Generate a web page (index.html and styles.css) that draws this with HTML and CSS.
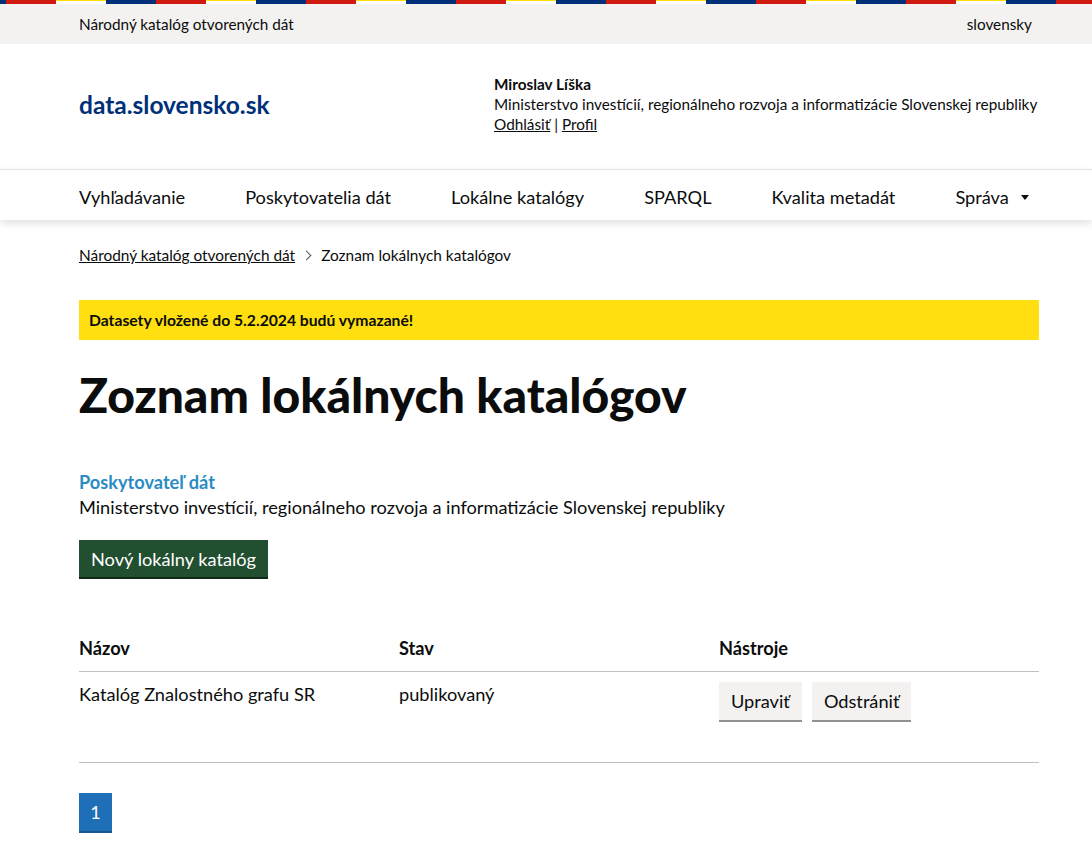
FILE: index.html
```html
<!DOCTYPE html>
<html lang="sk">
<head>
<meta charset="utf-8">
<title>Zoznam lokálnych katalógov</title>
<link rel="stylesheet" href="styles.css">
</head>
<body>
<div class="stripe"></div>
<div class="topbar">
  <div class="wrap topbar-inner">
    <span>Národný katalóg otvorených dát</span>
    <span class="lang">slovensky</span>
  </div>
</div>
<header class="header">
  <div class="wrap header-inner">
    <a class="logo" href="#">data.slovensko.sk</a>
    <div class="user">
      <div class="user-name">Miroslav Líška</div>
      <div>Ministerstvo investícií, regionálneho rozvoja a informatizácie Slovenskej republiky</div>
      <div><a href="#">Odhlásiť</a> | <a href="#">Profil</a></div>
    </div>
  </div>
</header>
<nav class="nav">
  <div class="wrap nav-inner">
    <a href="#">Vyhľadávanie</a>
    <a href="#">Poskytovatelia dát</a>
    <a href="#">Lokálne katalógy</a>
    <a href="#">SPARQL</a>
    <a href="#">Kvalita metadát</a>
    <a href="#" class="dropdown">Správa <span class="caret"></span></a>
  </div>
</nav>
<main class="wrap main">
  <div class="breadcrumb">
    <a href="#">Národný katalóg otvorených dát</a>
    <span class="chev"></span>
    <span>Zoznam lokálnych katalógov</span>
  </div>
  <div class="banner">Datasety vložené do 5.2.2024 budú vymazané!</div>
  <h1 class="title">Zoznam lokálnych katalógov</h1>
  <div class="provider-label">Poskytovateľ dát</div>
  <div class="provider">Ministerstvo investícií, regionálneho rozvoja a informatizácie Slovenskej republiky</div>
  <button class="btn-primary">Nový lokálny katalóg</button>
  <table class="table">
    <thead>
      <tr><th>Názov</th><th>Stav</th><th>Nástroje</th></tr>
    </thead>
    <tbody>
      <tr>
        <td>Katalóg Znalostného grafu SR</td>
        <td>publikovaný</td>
        <td><div class="tools"><button class="btn-sec">Upraviť</button><button class="btn-sec">Odstrániť</button></div></td>
      </tr>
    </tbody>
  </table>
  <div class="pagination"><span class="page">1</span></div>
</main>
</body>
</html>
```

FILE: styles.css
```css
* { box-sizing: border-box; }
body {
  margin: 0;
  font-family: "Lato", "Noto Sans", sans-serif;
  color: #0b0c0c;
  background: #fff;
}
a { color: inherit; }
.wrap { width: 960px; margin-left: 79px; }

.stripe {
  height: 4px;
  background:
    repeating-linear-gradient(90deg, #d0190f 0 50px, transparent 50px 100px, #003078 100px 150px) 6px 0 / 150px 4px repeat-x,
    repeating-linear-gradient(90deg, transparent 0 50px, #ffdd00 50px 100px, transparent 100px 150px) 6px 0 / 150px 1px repeat-x,
    #fff;
}
.topbar { background: #f3f2f1; height: 40px; font-size: 15.3px; }
.topbar-inner { display: flex; justify-content: space-between; align-items: center; height: 40px; padding-right: 7px; }

.header { border-bottom: 1px solid #e6e6e6; }
.header-inner { display: flex; align-items: center; padding: 30px 0 35px; }
.logo { color: #003078; font-weight: 700; font-size: 24.5px; text-decoration: none; width: 415px; }
.user { font-size: 15.3px; line-height: 20px; }
.user-name { font-weight: 700; }

.nav { background: #fff; box-shadow: 0 3px 8px rgba(0,0,0,0.13); position: relative; }
.nav-inner { display: flex; gap: 60px; height: 50px; align-items: center; padding-top: 4px; font-size: 18.2px; }
.nav-inner a { text-decoration: none; }
.dropdown { display: flex; align-items: center; gap: 12px; }
.caret { width: 0; height: 0; border-left: 4px solid transparent; border-right: 4px solid transparent; border-top: 5px solid #0b0c0c; }

.main { padding-top: 25px; }
.breadcrumb { font-size: 15.4px; line-height: 20px; display: flex; align-items: center; gap: 9px; }
.chev { width: 7px; height: 7px; border-top: 1px solid #505a5f; border-right: 1px solid #505a5f; transform: rotate(45deg); margin: 0 2px 0 -1px; }
.banner { margin-top: 35px; background: #ffdf0f; height: 40px; display: flex; align-items: center; padding-left: 10px; font-weight: 700; font-size: 15.7px; }
.title { margin: 25px 0 0; font-size: 48px; line-height: 60px; font-weight: 900; }
.provider-label { margin-top: 45px; color: #2b8cc4; font-weight: 700; font-size: 18.2px; line-height: 25px; }
.provider { font-size: 18.2px; line-height: 25px; }
.btn-primary {
  margin-top: 20px;
  font-family: inherit; font-size: 18.2px;
  background: #234f31; color: #fff; border: 0; border-bottom: 2px solid #102a17;
  height: 39px; padding: 0 12px; cursor: pointer;
}
.table { margin-top: 57px; width: 960px; border-collapse: collapse; font-size: 18.2px; }
.table th { text-align: left; width: 320px; font-weight: 700; padding: 0 0 10px; line-height: 25px; border-bottom: 1px solid #bfc1c3; }
.table td { vertical-align: top; padding: 10px 0 40px; line-height: 25px; border-bottom: 1px solid #bfc1c3; }
.tools { display: flex; gap: 10px; }
.btn-sec {
  font-family: inherit; font-size: 18.2px; color: #0b0c0c;
  background: #f3f2f1; border: 0; border-bottom: 2px solid #929191;
  height: 40px; padding: 0 12px; cursor: pointer;
}
.pagination { margin-top: 30px; }
.page { display: inline-flex; align-items: center; justify-content: center; width: 33px; height: 40px; background: #1f6fb8; color: #fff; border-bottom: 2px solid #17568f; font-size: 18px; }
```
